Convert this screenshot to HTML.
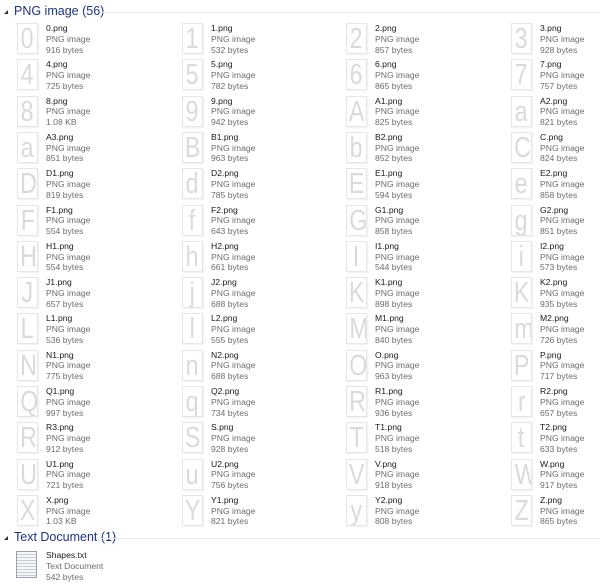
<!DOCTYPE html>
<html><head><meta charset="utf-8"><style>
body{margin:0;width:600px;height:583px;background:#fff;position:relative;overflow:hidden;font-family:"Liberation Sans",sans-serif}
.h{position:absolute;left:14px;font-size:12.5px;color:#1e3287;white-space:nowrap}
.tri{position:absolute;left:4px;width:0;height:0;border-left:4px solid transparent;border-bottom:4px solid #333}
.ln{position:absolute;height:1px;background:#e3e8ef;right:0}
.i{position:absolute;width:160px;height:36px}
.t{position:absolute;left:0;top:1px;width:19px;height:29px;border:1px solid #e6e6e6;box-shadow:1px 1px 1px #f0f0f0;background:#fff;color:#dadada;font-size:29px;line-height:30px;text-align:center;overflow:hidden}
.t span{display:inline-block;transform:scaleX(0.8)}
.x{position:absolute;left:29px;top:1px;font-size:8.6px;line-height:10.8px;color:#6d6d6d;white-space:nowrap}
.x b{font-weight:normal;color:#1a1a1a;display:block}
</style></head><body>
<div class="tri" style="top:10px"></div><div class="h" style="top:4px">PNG image (56)</div><div class="ln" style="left:100px;top:12px"></div>
<div id="g"></div>
<div class="tri" style="top:536px"></div><div class="h" style="top:530px">Text Document (1)</div><div class="ln" style="left:97px;top:538px"></div>
<div class="i" style="left:16px;top:549px">
<div style="position:absolute;left:0;top:2px;width:19px;height:25px;background:repeating-linear-gradient(#f4f6f9 0 2px,#c9ced6 2px 3px);border:1px solid #9aa2ae"></div>
<div class="x" style="left:30px"><b>Shapes.txt</b>Text Document<br>542 bytes</div></div>
<script>
var d=[["0","0","916 bytes"],["1","1","532 bytes"],["2","2","857 bytes"],["3","3","928 bytes"],["4","4","725 bytes"],["5","5","782 bytes"],["6","6","865 bytes"],["7","7","757 bytes"],["8","8","1.08 KB"],["9","9","942 bytes"],["A1","A","825 bytes"],["A2","a","821 bytes"],["A3","a","851 bytes"],["B1","B","963 bytes"],["B2","b","852 bytes"],["C","C","824 bytes"],["D1","D","819 bytes"],["D2","d","785 bytes"],["E1","E","594 bytes"],["E2","e","858 bytes"],["F1","F","554 bytes"],["F2","f","643 bytes"],["G1","G","858 bytes"],["G2","g","851 bytes"],["H1","H","554 bytes"],["H2","h","661 bytes"],["I1","I","544 bytes"],["I2","i","573 bytes"],["J1","J","657 bytes"],["J2","j","688 bytes"],["K1","K","898 bytes"],["K2","K","935 bytes"],["L1","L","536 bytes"],["L2","l","555 bytes"],["M1","M","840 bytes"],["M2","m","726 bytes"],["N1","N","775 bytes"],["N2","n","688 bytes"],["O","O","963 bytes"],["P","P","717 bytes"],["Q1","Q","997 bytes"],["Q2","q","734 bytes"],["R1","R","936 bytes"],["R2","r","657 bytes"],["R3","R","912 bytes"],["S","S","928 bytes"],["T1","T","518 bytes"],["T2","t","633 bytes"],["U1","U","721 bytes"],["U2","u","756 bytes"],["V","V","918 bytes"],["W","W","917 bytes"],["X","X","1.03 KB"],["Y1","Y","821 bytes"],["Y2","y","808 bytes"],["Z","Z","865 bytes"]];
var cx=[17,182,346,511],h="";
d.forEach(function(e,k){var r=Math.floor(k/4),c=k%4,y=22+r*36.3;
h+='<div class="i" style="left:'+cx[c]+'px;top:'+y.toFixed(1)+'px"><div class="t"><span>'+e[1]+'</span></div><div class="x"><b>'+e[0]+'.png</b>PNG image<br>'+e[2]+'</div></div>';});
document.getElementById("g").innerHTML=h;
</script>
</body></html>
